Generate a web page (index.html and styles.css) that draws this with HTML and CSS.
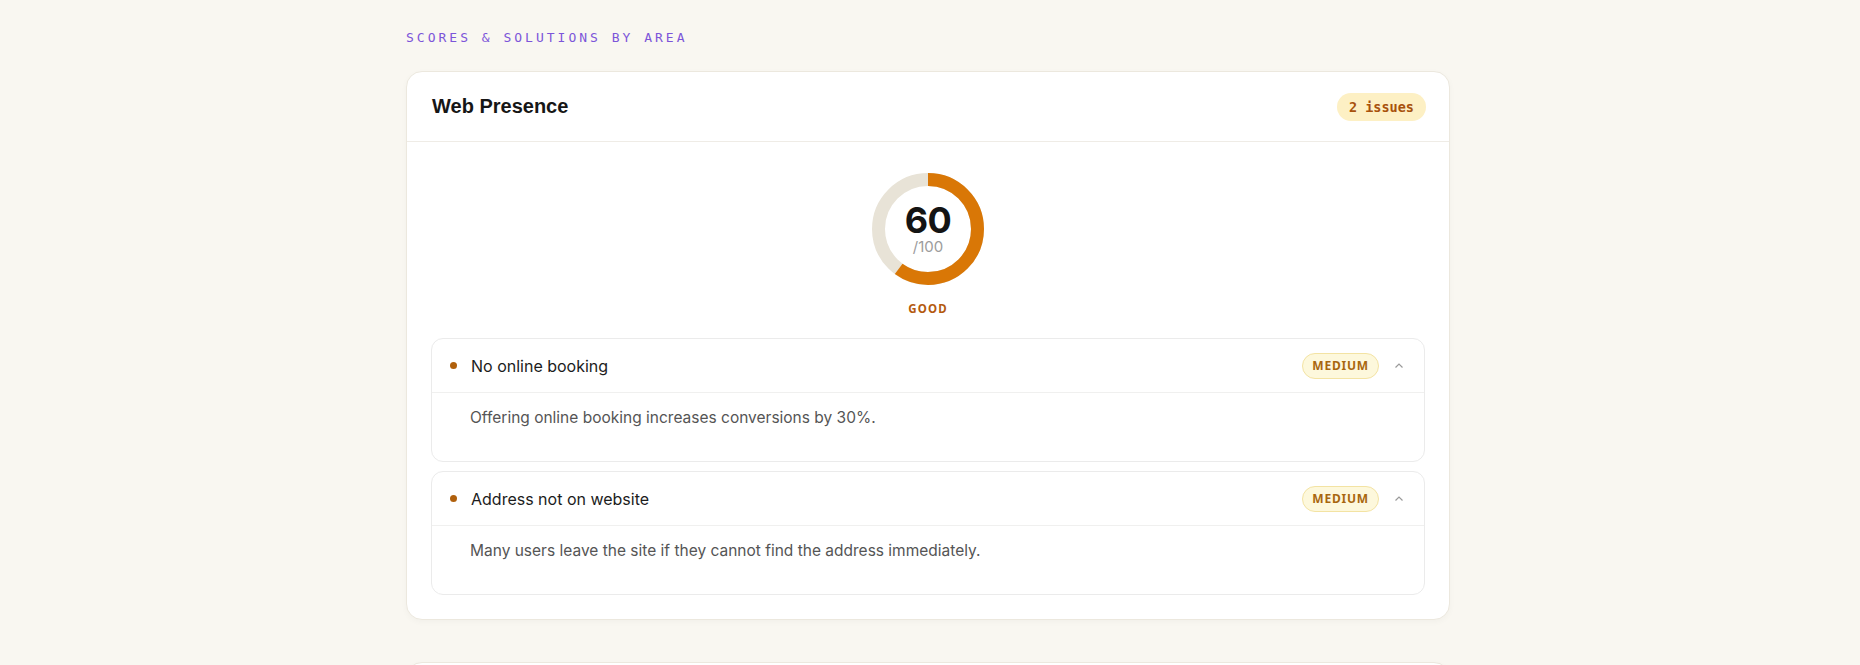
FILE: index.html
```html
<!DOCTYPE html>
<html lang="en">

<head>
    <meta charset="UTF-8">
    <meta name="viewport" content="width=device-width, initial-scale=1.0">
    <title>Scores &amp; Solutions</title>
    <link rel="stylesheet" href="styles.css">
</head>

<body>
    <div class="report">
        <div class="section-label">SCORES &amp; SOLUTIONS BY AREA</div>

        <div class="area-card">
            <div class="area-header">
                <h3>Web Presence</h3>
                <span class="issue-count">2 issues</span>
            </div>

            <div class="area-body">
                <div class="score">
                    <div class="gauge">
                        <svg width="112" height="112" viewBox="0 0 112 112">
                            <circle cx="56" cy="56" r="49.5" fill="none" stroke="#e8e3d7" stroke-width="13"></circle>
                            <circle cx="56" cy="56" r="49.5" fill="none" stroke="#d97706" stroke-width="13"
                                stroke-dasharray="186.6 311" transform="rotate(-90 56 56)"></circle>
                        </svg>
                        <div class="gauge-text">
                            <span class="gauge-value">60</span>
                            <span class="gauge-max">/100</span>
                        </div>
                    </div>
                    <div class="score-label">GOOD</div>
                </div>

                <div class="issue">
                    <div class="issue-header">
                        <span class="dot"></span>
                        <span class="issue-title">No online booking</span>
                        <span class="severity">MEDIUM</span>
                        <svg class="chevron" width="12" height="12" viewBox="0 0 12 12">
                            <path d="M2.5 7.5 L6 4 L9.5 7.5" fill="none" stroke="#9a9a9a" stroke-width="1.2"></path>
                        </svg>
                    </div>
                    <div class="issue-body">Offering online booking increases conversions by 30%.</div>
                </div>

                <div class="issue">
                    <div class="issue-header">
                        <span class="dot"></span>
                        <span class="issue-title">Address not on website</span>
                        <span class="severity">MEDIUM</span>
                        <svg class="chevron" width="12" height="12" viewBox="0 0 12 12">
                            <path d="M2.5 7.5 L6 4 L9.5 7.5" fill="none" stroke="#9a9a9a" stroke-width="1.2"></path>
                        </svg>
                    </div>
                    <div class="issue-body">Many users leave the site if they cannot find the address immediately.</div>
                </div>
            </div>
        </div>

        <div class="area-card">
            <div class="area-header">
                <h3>Social Media</h3>
                <span class="issue-count">1 issue</span>
            </div>
        </div>
    </div>
</body>

</html>
```

FILE: styles.css
```css
body {
    font-family: Inter, "Noto Sans", sans-serif;
    margin: 0;
    padding: 0;
    background-color: #f9f7f1;
    color: #1a1a1a;
}

.report {
    width: 1044px;
    margin: 0 calc(50% - 520px) 0 calc(50% - 524px);
    padding-top: 30px;
}

.section-label {
    font-family: "DejaVu Sans Mono", monospace;
    font-size: 13px;
    line-height: 16px;
    letter-spacing: 3px;
    color: #7c55d9;
    margin-bottom: 25px;
}

.area-card {
    background-color: #fff;
    border: 1px solid #ece8de;
    border-radius: 16px;
    box-shadow: 0 2px 6px rgba(0, 0, 0, 0.03);
    margin-bottom: 42px;
    overflow: hidden;
}

.area-header {
    height: 69px;
    padding: 0 23px 0 25px;
    border-bottom: 1px solid #efece6;
    display: flex;
    justify-content: space-between;
    align-items: center;
}

.area-header h3 {
    margin: 0;
    font-family: "Liberation Sans", Arial, sans-serif;
    font-size: 20px;
    font-weight: bold;
    color: #161616;
}

.issue-count {
    font-family: "DejaVu Sans Mono", monospace;
    font-size: 13.5px;
    font-weight: bold;
    color: #a8520c;
    background-color: #fdf0c4;
    border-radius: 14px;
    height: 28px;
    line-height: 28px;
    padding: 0 12px;
}

.area-body {
    padding: 31px 24px 24px;
}

.score {
    display: flex;
    flex-direction: column;
    align-items: center;
    margin-bottom: 21px;
}

.gauge {
    position: relative;
    width: 112px;
    height: 112px;
}

.gauge svg {
    display: block;
}

.gauge-text {
    position: absolute;
    inset: 0;
    display: flex;
    flex-direction: column;
    align-items: center;
    justify-content: center;
}

.gauge-value {
    font-family: Inter, sans-serif;
    font-size: 36px;
    font-weight: 700;
    line-height: 36px;
    letter-spacing: -0.5px;
    color: #141414;
}

.gauge-max {
    font-size: 15px;
    line-height: 18px;
    color: #9c9c9c;
}

.score-label {
    margin-top: 16px;
    font-family: "Noto Sans", sans-serif;
    font-size: 11.5px;
    font-weight: bold;
    letter-spacing: 1.2px;
    line-height: 16px;
    color: #b45a0e;
}

.issue {
    border: 1px solid #ebebeb;
    border-radius: 12px;
    margin-bottom: 9px;
}

.issue:last-child {
    margin-bottom: 0;
}

.issue-header {
    height: 53px;
    padding: 0 19px 0 18px;
    border-bottom: 1px solid #f0f0ef;
    display: flex;
    align-items: center;
}

.dot {
    width: 7px;
    height: 7px;
    border-radius: 50%;
    background-color: #b0600c;
    margin-right: 14px;
}

.issue-title {
    flex: 1;
    font-size: 16px;
    color: #1c1c1c;
}

.severity {
    font-family: "Noto Sans", sans-serif;
    font-size: 12px;
    font-weight: bold;
    letter-spacing: 0.8px;
    color: #a8670f;
    background-color: #fdf8dc;
    border: 1px solid #f3e3a3;
    border-radius: 13px;
    height: 24px;
    line-height: 24px;
    padding: 0 9px;
    margin-right: 14px;
}

.chevron {
    display: block;
}

.issue-body {
    padding: 13px 20px 31px 38px;
    font-size: 15.5px;
    line-height: 24px;
    color: #555;
}
```
